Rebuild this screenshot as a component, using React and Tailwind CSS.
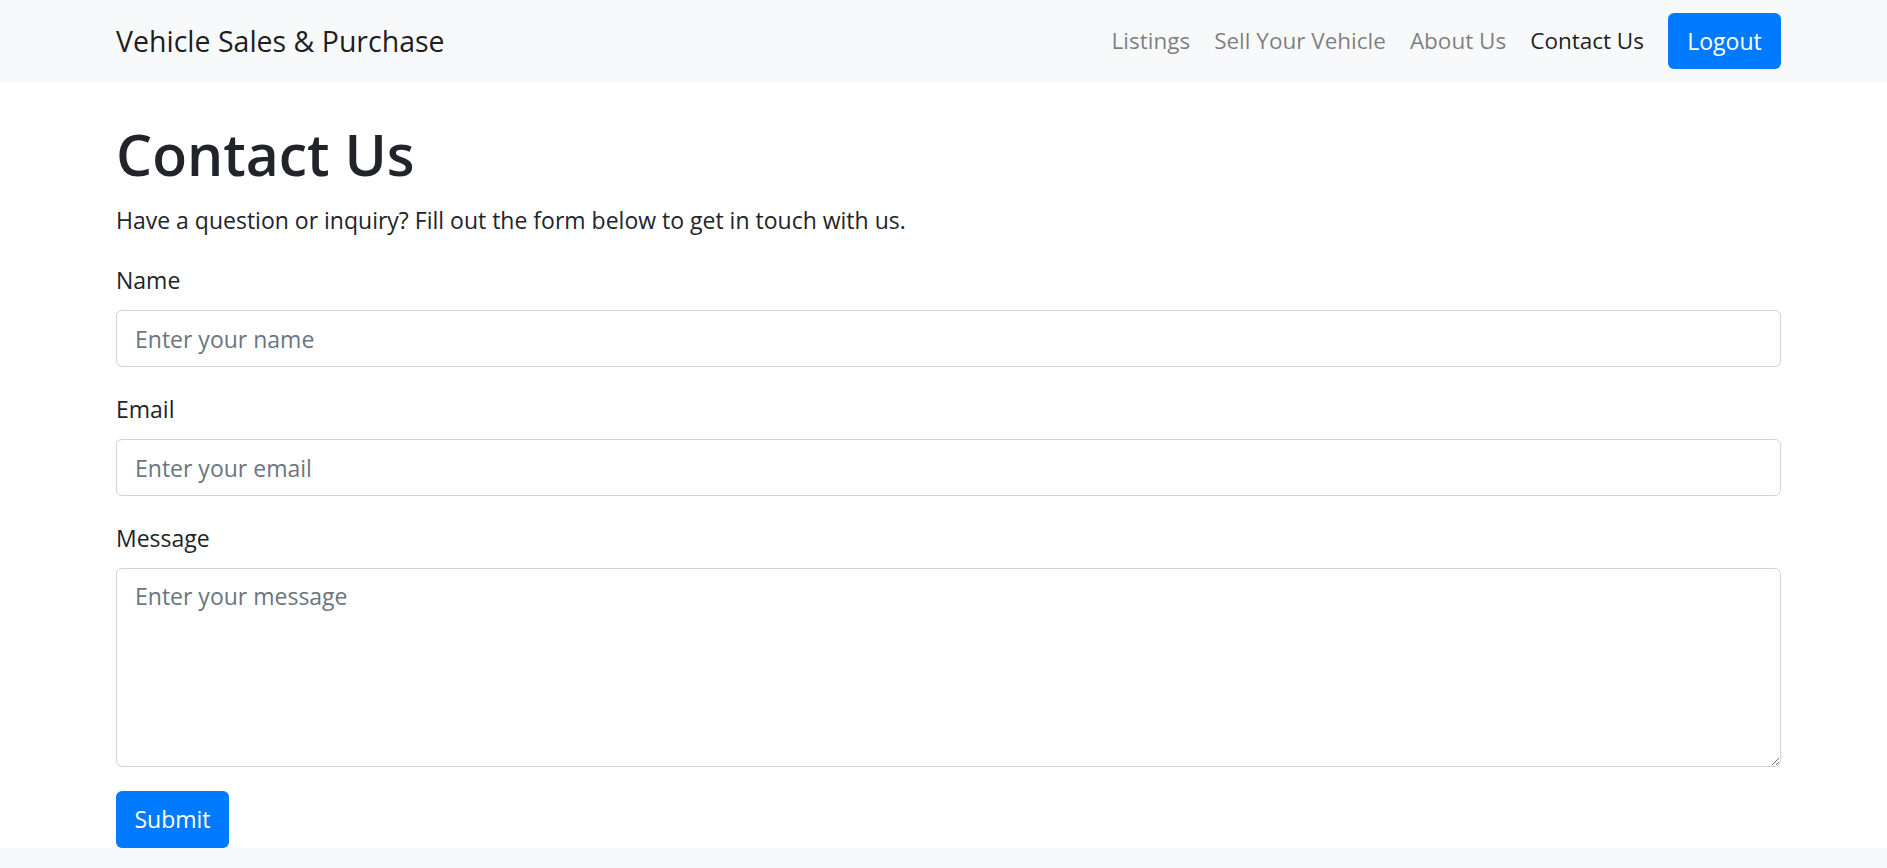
const font = { fontFamily: '"Open Sans", "Noto Sans", sans-serif' };

const NavLink = ({ label, active = false }) => (
  <a href="#" className={`text-[22.5px] leading-[36px] ${active ? 'text-black/90' : 'text-black/50'}`}>
    {label}
  </a>
);

const Field = ({ label, type = 'text', placeholder }) => (
  <div className="mb-[24px]">
    <label className="block text-[23px] leading-[36px] mb-[12px] text-[#212529]">{label}</label>
    <input
      type={type}
      placeholder={placeholder}
      className="block w-full h-[57px] px-[18px] text-[23px] text-[#495057] bg-white border border-[#ced4da] rounded-[6px] outline-none placeholder:text-[#6c757d]"
    />
  </div>
);

export default function App() {
  return (
    <div className="min-h-screen flex flex-col bg-white" style={font}>
      <nav className="h-[82px] bg-[#f8f9fa] flex items-center">
        <div className="ml-[116px] w-[1665px] flex items-center justify-between">
          <a href="#" className="text-[28.5px] leading-[45px] text-black/90">Vehicle Sales &amp; Purchase</a>
          <div className="flex items-center gap-6">
            <NavLink label="Listings" />
            <NavLink label="Sell Your Vehicle" />
            <NavLink label="About Us" />
            <NavLink label="Contact Us" active />
            <button className="h-[56px] w-[113px] flex items-center justify-center rounded-[6px] bg-[#007bff] text-white text-[23px]">
              Logout
            </button>
          </div>
        </div>
      </nav>

      <main className="ml-[116px] w-[1665px] pt-[36px]">
        <h1 className="text-[57px] font-semibold leading-[72px] text-[#212529] mb-[12px] pt-[2px] -mt-[2px]">Contact Us</h1>
        <p className="text-[23px] leading-[36px] text-[#212529] mb-[24px]">
          Have a question or inquiry? Fill out the form below to get in touch with us.
        </p>
        <form onSubmit={(e) => e.preventDefault()}>
          <Field label="Name" placeholder="Enter your name" />
          <Field label="Email" type="email" placeholder="Enter your email" />
          <div className="mb-[24px]">
            <label className="block text-[23px] leading-[36px] mb-[12px] text-[#212529]">Message</label>
            <textarea
              placeholder="Enter your message"
              className="block w-full h-[199px] px-[18px] py-[9px] text-[23px] leading-[36px] text-[#495057] bg-white border border-[#ced4da] rounded-[6px] outline-none resize-y placeholder:text-[#6c757d]"
            />
          </div>
          <button type="submit" className="h-[57px] w-[113px] flex items-center justify-center rounded-[6px] bg-[#007bff] text-white text-[23px]">
            Submit
          </button>
        </form>
      </main>

      <footer className="flex-1 bg-[#f8f9fa]" />
    </div>
  );
}
